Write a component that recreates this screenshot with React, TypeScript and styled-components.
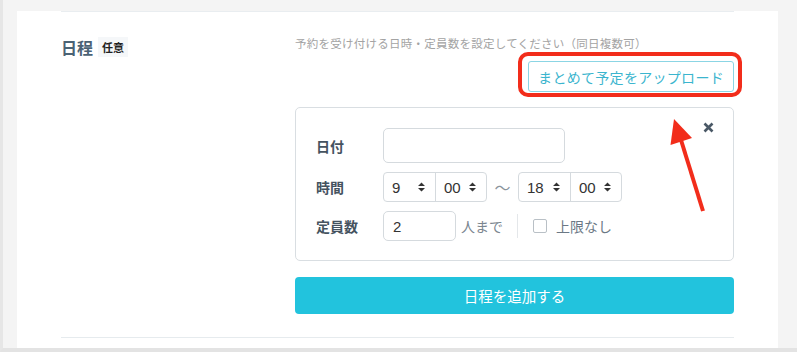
import { createGlobalStyle, styled } from 'styled-components';

const GlobalStyle = createGlobalStyle`
  * {
    box-sizing: border-box;
  }

  body {
    margin: 0;
    background: #ffffff;
    font-family: 'Liberation Sans', 'Noto Sans CJK JP', sans-serif;
  }
`;

const Frame = styled.div`
  width: 797px;
  height: 352px;
  padding-left: 14px;
  background: #f4f4f4;
  border-left: 3px solid #e6e6e6;
  border-bottom: 4px solid #e3e3e3;
  overflow: hidden;
`;

const Panel = styled.div`
  width: 761px;
  height: 100%;
  padding: 0 44px;
  background: #ffffff;
`;

const Section = styled.section`
  margin-top: 11px;
  border-top: 1px solid #e9edf0;
  display: grid;
  grid-template-columns: 234px 1fr;
`;

const LabelCol = styled.div`
  display: flex;
  align-items: center;
  align-self: start;
  gap: 5px;
  padding-top: 23px;
  height: 47px;
`;

const Title = styled.h3`
  margin: 0;
  font-size: 16px;
  font-weight: 700;
  color: #4b6274;
`;

const Badge = styled.span`
  padding: 2px 4px;
  background: #f5f7f9;
  font-size: 11px;
  font-weight: 700;
  color: #222222;
`;

const Content = styled.div`
  display: flex;
  flex-direction: column;
  padding-top: 24px;
`;

const Hint = styled.p`
  margin: 0;
  font-size: 11.5px;
  line-height: 16px;
  letter-spacing: 0.25px;
  color: #a3a3a3;
  white-space: nowrap;
`;

const UploadRow = styled.div`
  display: flex;
  justify-content: flex-end;
  margin-top: 9px;
`;

const Highlight = styled.div`
  position: relative;

  &::after {
    content: '';
    position: absolute;
    top: -9px;
    left: -10px;
    right: -8px;
    bottom: -5px;
    border: 4px solid #f22d1b;
    border-radius: 10px;
    pointer-events: none;
  }
`;

const UploadButton = styled.button`
  height: 31px;
  padding: 0 9px;
  background: #ffffff;
  border: 1px solid #8bd5e4;
  border-radius: 3px;
  font-family: inherit;
  font-size: 14px;
  letter-spacing: 0.3px;
  color: #3bb5ce;
`;

const Card = styled.div`
  position: relative;
  margin-top: 15px;
  padding: 20px 20px 19px;
  border: 1px solid #d9dee2;
  border-radius: 5px;
  display: flex;
  flex-direction: column;
  gap: 9px;
`;

const CloseButton = styled.button`
  position: absolute;
  top: 14px;
  right: 19px;
  padding: 0;
  border: none;
  background: none;
  display: flex;
`;

const Annotation = styled.svg`
  position: absolute;
  left: 365px;
  top: 5px;
  overflow: visible;
`;

const Row = styled.div`
  display: flex;
  align-items: center;
`;

const FieldLabel = styled.span`
  width: 67px;
  font-size: 14px;
  font-weight: 700;
  color: #45535f;
`;

const TextInput = styled.div<{ $w: number; $h: number }>`
  width: ${(p) => p.$w}px;
  height: ${(p) => p.$h}px;
  padding-left: 9px;
  display: flex;
  align-items: center;
  border: 1px solid #d5dade;
  border-radius: 5px;
  font-size: 15px;
  color: #333333;
`;

const SelectGroup = styled.div`
  display: flex;
  height: 30px;
  border: 1px solid #d5dade;
  border-radius: 4px;
`;

const Segment = styled.div`
  width: 51px;
  padding: 0 10px 0 8px;
  display: flex;
  align-items: center;
  justify-content: space-between;
  font-size: 15px;
  color: #333333;

  & + & {
    border-left: 1px solid #d5dade;
  }
`;

const Tilde = styled.span`
  width: 31px;
  text-align: center;
  font-size: 16px;
  color: #8a949c;
`;

const Unit = styled.span`
  margin-left: 5px;
  font-size: 14px;
  color: #7b8690;
`;

const Separator = styled.span`
  width: 1px;
  height: 24px;
  margin: 0 15px 0 14px;
  background: #e4e7ea;
`;

const Check = styled.span`
  width: 14px;
  height: 14px;
  border: 1px solid #b9c0c6;
  border-radius: 2px;
  margin-right: 9px;
`;

const CheckLabel = styled.span`
  font-size: 14px;
  color: #6b7885;
`;

const AddButton = styled.button`
  margin-top: 16px;
  height: 37px;
  border: none;
  border-radius: 4px;
  background: #22c3dd;
  font-family: inherit;
  font-size: 14.5px;
  color: #ffffff;
`;

const Divider = styled.div`
  margin-top: 23px;
  height: 1px;
  background: #e6ebee;
`;

function Updown() {
  return (
    <svg width="7" height="10" viewBox="0 0 7 10">
      <path d="M0 4 L3.5 0.5 L7 4 Z M0 6 L3.5 9.5 L7 6 Z" fill="#333" />
    </svg>
  );
}

function TimeSelect(props: { hour: string; minute: string }) {
  return (
    <SelectGroup>
      <Segment>
        {props.hour}
        <Updown />
      </Segment>
      <Segment>
        {props.minute}
        <Updown />
      </Segment>
    </SelectGroup>
  );
}

export default function App() {
  return (
    <>
      <GlobalStyle />
      <Frame>
        <Panel>
          <Section>
            <LabelCol>
              <Title>日程</Title>
              <Badge>任意</Badge>
            </LabelCol>
            <Content>
              <Hint>予約を受け付ける日時・定員数を設定してください（同日複数可）</Hint>
              <UploadRow>
                <Highlight>
                  <UploadButton>まとめて予定をアップロード</UploadButton>
                </Highlight>
              </UploadRow>
              <Card>
                <CloseButton aria-label="閉じる">
                  <svg width="11" height="11" viewBox="0 0 11 11">
                    <path d="M1.5 1.5 L9.5 9.5 M9.5 1.5 L1.5 9.5" stroke="#4a5866" strokeWidth="2.6" />
                  </svg>
                </CloseButton>
                <Annotation width="50" height="105" viewBox="0 0 50 105">
                  <path d="M20 27 L42 98" stroke="#f22d1b" strokeWidth="4" />
                  <path d="M13 6 L31 25 L9.5 32 Z" fill="#f22d1b" />
                </Annotation>
                <Row>
                  <FieldLabel>日付</FieldLabel>
                  <TextInput $w={182} $h={35} />
                </Row>
                <Row>
                  <FieldLabel>時間</FieldLabel>
                  <TimeSelect hour="9" minute="00" />
                  <Tilde>〜</Tilde>
                  <TimeSelect hour="18" minute="00" />
                </Row>
                <Row>
                  <FieldLabel>定員数</FieldLabel>
                  <TextInput $w={73} $h={30}>2</TextInput>
                  <Unit>人まで</Unit>
                  <Separator />
                  <Check />
                  <CheckLabel>上限なし</CheckLabel>
                </Row>
              </Card>
              <AddButton>日程を追加する</AddButton>
            </Content>
          </Section>
          <Divider />
        </Panel>
      </Frame>
    </>
  );
}
